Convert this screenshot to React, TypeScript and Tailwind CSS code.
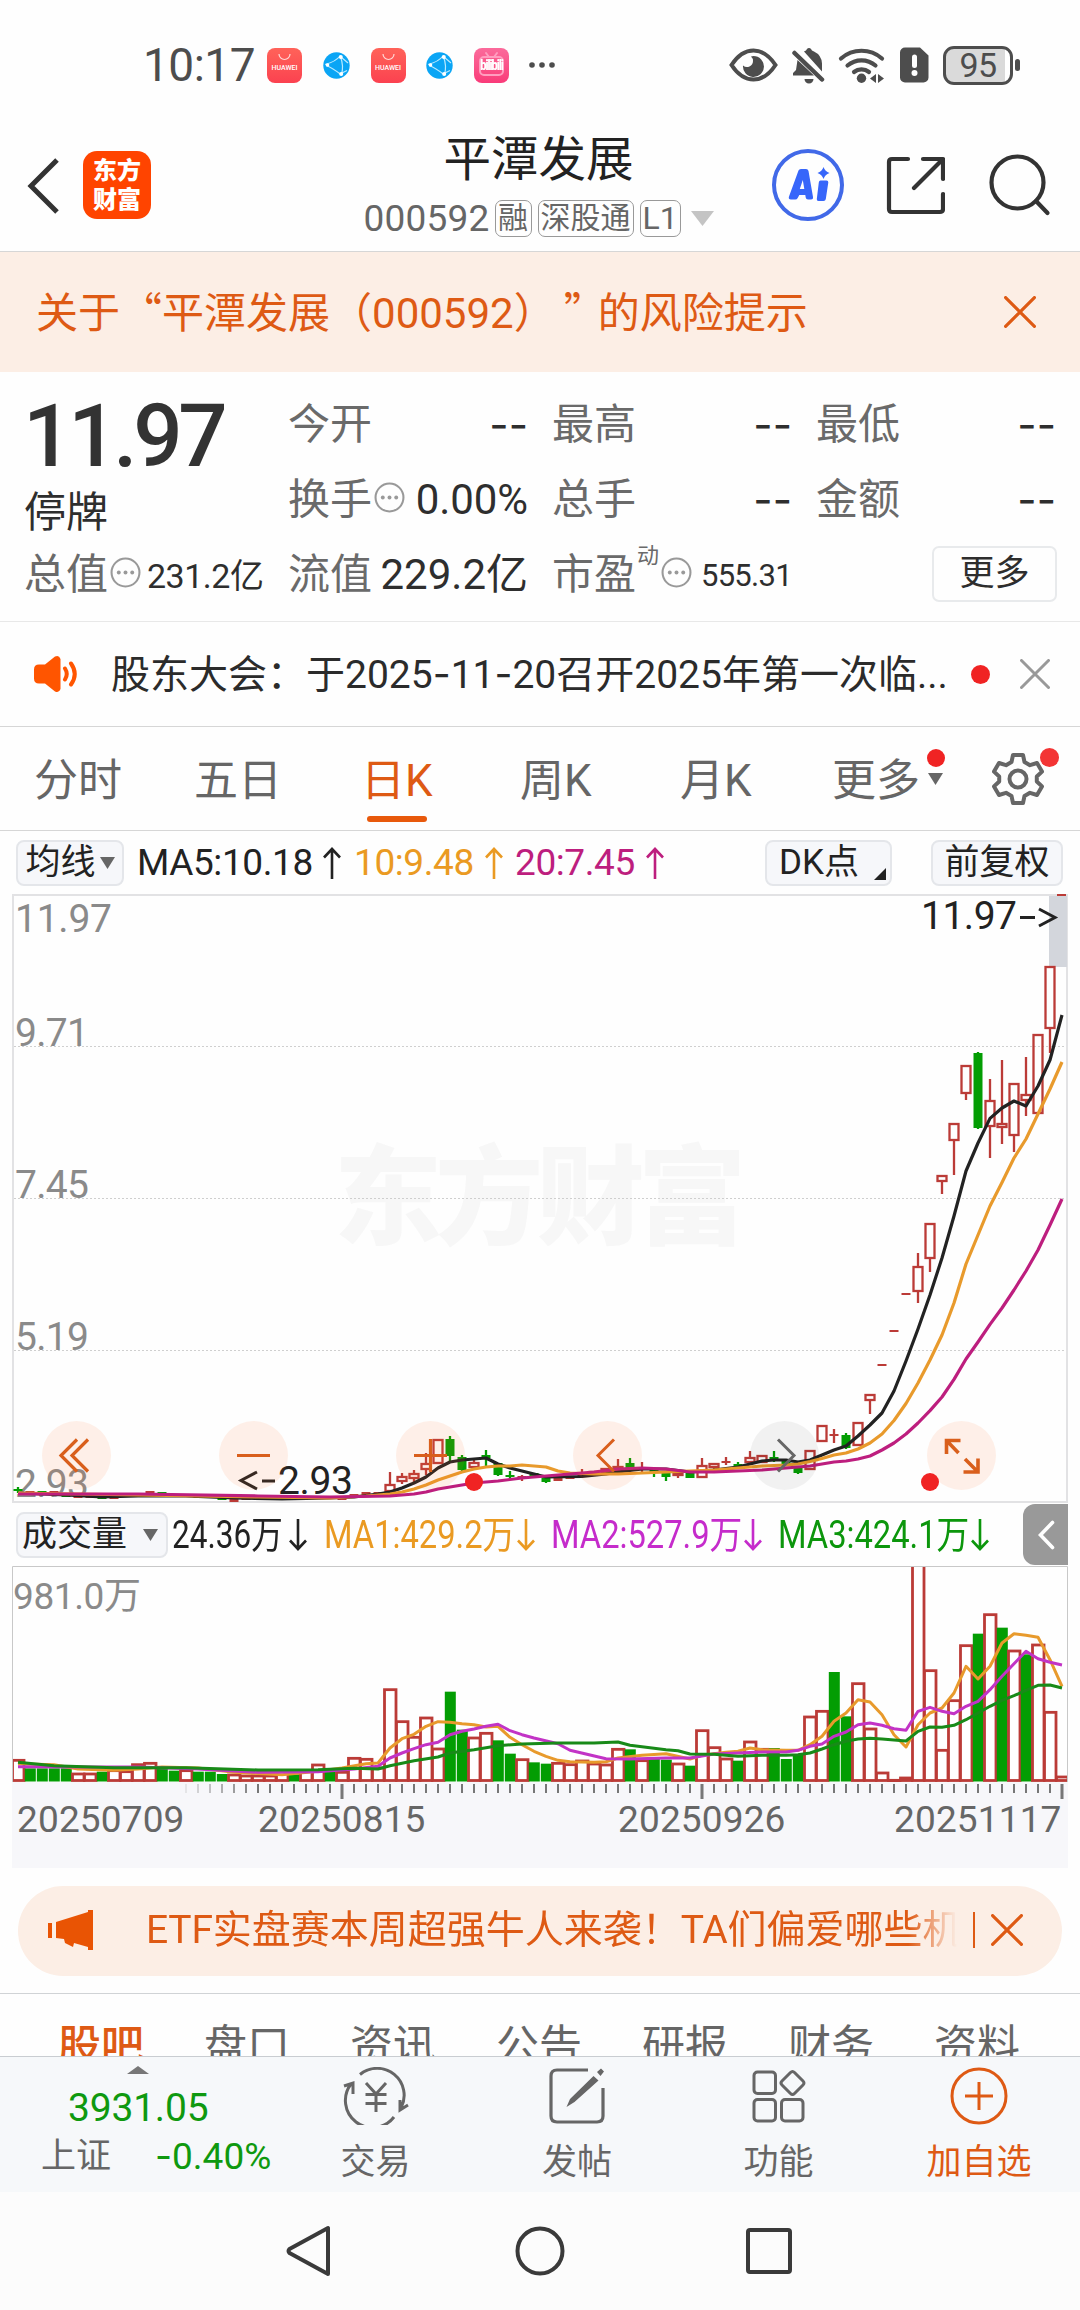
import React from "react";

/* ---------- chart data (vertical values are chart pixels) ---------- */

const CX = (i: number) => 6 + i * 12;

// [index, kind, bodyTop, bodyBottom, wickTop, wickBottom]
type Candle = [number, "r" | "g", number, number, number?, number?];

const candles: Candle[] = [
  [0, "g", 595, 597, 593, 599], [1, "r", 597, 598], [2, "g", 597, 598], [3, "r", 597, 599],
  [4, "g", 600, 603], [5, "r", 601, 604], [6, "r", 601, 604], [7, "g", 603, 605],
  [8, "r", 603, 605], [9, "r", 600, 602], [10, "r", 600, 602], [11, "r", 597, 600],
  [12, "g", 598, 600], [13, "r", 600, 602], [14, "r", 601, 603], [15, "r", 602, 604],
  [16, "g", 602, 604], [17, "g", 603, 606], [18, "r", 605, 608], [19, "r", 604, 606],
  [20, "r", 604, 606], [21, "r", 603, 605], [22, "r", 603, 605], [23, "g", 603, 605],
  [24, "r", 602, 604], [25, "r", 602, 604], [26, "r", 603, 605], [27, "r", 604, 606],
  [28, "r", 600, 602], [29, "r", 598, 601], [30, "r", 598, 600], [31, "r", 590, 598, 578, 598],
  [32, "r", 582, 588, 579, 590], [33, "r", 579, 585, 576, 588], [34, "r", 569, 576, 559, 581],
  [35, "r", 545, 570], [36, "g", 545, 562, 542, 567], [37, "g", 563, 576, 561, 577],
  [38, "r", 568, 574, 566, 576], [39, "g", 561, 564, 556, 572], [40, "g", 569, 581, 569, 582],
  [41, "g", 581, 582, 577, 585], [42, "r", 582, 583, 581, 587], [43, "g", 579, 582],
  [44, "g", 584, 588, 584, 589], [45, "r", 584, 587], [46, "r", 582, 585], [47, "r", 579, 582, 575, 582],
  [48, "r", 577, 581], [49, "r", 574, 579], [50, "r", 572, 577, 565, 577], [51, "g", 569, 574, 564, 576],
  [52, "r", 573, 576, 568, 580], [53, "g", 576, 579, 576, 583], [54, "g", 579, 583, 577, 587],
  [55, "r", 578, 582, 578, 584], [56, "g", 579, 584], [57, "r", 571, 584, 564, 584],
  [58, "r", 569, 574, 569, 575], [59, "r", 567, 569, 563, 571], [60, "g", 570, 572, 568, 573],
  [61, "r", 563, 569, 557, 569], [62, "r", 561, 569], [63, "g", 563, 565, 557, 568],
  [64, "g", 567, 572], [65, "g", 573, 579, 573, 580], [66, "r", 556, 576],
  [67, "r", 531, 548], [68, "r", 540, 542, 535, 549], [69, "g", 541, 554, 539, 555], [70, "r", 528, 552],
  [71, "r", 500, 507, 500, 520], [72, "r", 470, 471], [73, "r", 436, 437], [74, "r", 399, 400],
  [75, "r", 372, 398, 359, 409], [76, "r", 329, 365, 329, 378], [77, "r", 281, 288, 281, 300],
  [78, "r", 229, 247, 229, 281], [79, "r", 171, 200, 171, 206], [80, "g", 159, 234, 158, 235],
  [81, "r", 206, 233, 185, 264], [82, "r", 229, 234, 166, 250], [83, "r", 189, 242, 189, 258],
  [84, "r", 200, 207, 163, 222], [85, "r", 140, 220], [86, "r", 72, 135, 72, 159],
];

type Pts = [number, number][];

const ma5: Pts = [[0, 599], [4, 601], [7, 603], [10, 602], [14, 602], [18, 604], [22, 605], [26, 604], [28, 603], [30, 600], [31, 598], [32, 594], [33, 589], [34, 583], [35, 574], [36, 568], [37, 566], [38, 565], [39, 564], [40, 570], [41, 574], [42, 577], [43, 580], [44, 583], [47, 582.5], [49, 580], [50, 578], [52, 575], [54, 575], [56, 578], [58, 576], [60, 573], [61, 570], [62, 567], [63, 566], [64, 566], [65, 568], [66, 566], [67, 561], [68, 556], [69, 552], [70, 542], [71, 531], [72, 519], [73, 497], [74, 467], [75, 435], [76, 401], [77, 364], [78, 322], [79, 277], [80, 249], [81, 224.4], [82, 214], [83, 207], [84, 212], [85, 192], [86, 166], [87, 121]];
const ma10: Pts = [[0, 599], [10, 601], [20, 603], [26, 604], [29, 602], [31, 600], [32, 598], [33, 595], [34, 591], [35, 586], [36, 582], [37, 578], [38, 575], [39, 573], [40, 572], [41, 572], [42, 571], [43, 572], [44, 573], [45, 577], [46, 579], [48, 580], [50, 580], [52, 579], [54, 578], [56, 577], [58, 576], [60, 574], [62, 572], [64, 571], [65, 570], [66, 567.5], [67, 564.5], [68, 561], [69, 559], [70, 555], [71, 549], [72, 540], [73, 526.5], [74, 509.5], [75, 489], [76, 466], [77, 441], [78, 409], [79, 370], [80, 341], [81, 312], [82, 288.5], [83, 264], [84, 245], [85, 220], [86, 195], [87, 168]];
const ma20: Pts = [[0, 600], [10, 600], [20, 602], [26, 603], [31, 602], [32, 601], [33, 600], [34, 598], [35, 595], [36, 593], [37, 591], [38, 589], [40, 587], [42, 584], [43, 583], [46, 580], [48, 578], [50, 575], [52, 574], [54, 575], [56, 578], [58, 578], [60, 577], [62, 576], [64, 574], [66, 572], [68, 568], [69, 567], [70, 565], [71, 562], [72, 556], [73, 549], [74, 540], [75, 529], [76, 516.6], [77, 503], [78, 485.4], [79, 465], [80, 448], [81, 430.4], [82, 414], [83, 396], [84, 377], [85, 356], [86, 331], [87, 305]];

const red = "#bb3b37";
const green = "#039d03";

const volumes: number[] = [
  1199, -1226, -1226, -1226, -1226, 1240, 1240, -1236, 1230, 1233, 1212, 1208, -1228, -1233, 1230, -1236,
  -1236, -1243, 1243, 1246, 1246, 1246, 1230, -1244, 1230, 1213, -1233, 1235, 1193, 1196, 1222, 987, 1083,
  1130, 1072, 1165, -996, -1110, 1132, 1118, -1142, -1182, 1197, -1208, -1212, 1208, 1212, 1201, 1210, 1213,
  1166, -1169, 1200, -1197, -1200, 1210, -1218, 1110, 1161, 1195, -1203, 1144, 1166, -1165, -1198, -1183,
  1069, 1052, -937, -1070, 969, 1105, 1237, 1259, 1252, 605, 930, 1169, 1020, 855, -822, 762, -804, 871,
  -884, 853, 1055, 1249,
];
const vma1: Pts = [[0, 1212], [3, 1215], [5, 1228], [8, 1232], [10, 1228], [12, 1222], [15, 1225], [18, 1238], [22, 1245], [25, 1235], [27, 1225], [29, 1212], [30, 1210], [31, 1165], [32, 1137], [33, 1124], [34, 1100], [35, 1086], [36, 1088], [37, 1092], [38, 1095], [39, 1102], [40, 1100], [41, 1133], [42, 1155], [43, 1175], [44, 1190], [45, 1202], [46, 1206], [48, 1208], [49, 1206], [50, 1195], [52, 1187], [54, 1182], [56, 1198], [57, 1187], [59, 1178], [60, 1175], [61, 1165], [62, 1170], [64, 1172], [65, 1172], [66, 1155], [67, 1130], [68, 1085], [69, 1060], [70, 1020], [71, 1027], [72, 1065], [73, 1125], [74, 1162], [75, 1095], [76, 1060], [77, 1045], [78, 1000], [79, 920], [80, 958], [81, 920], [82, 850], [83, 822], [84, 827], [85, 833], [86, 900], [87, 980]];
const vma2: Pts = [[0, 1221], [6, 1222], [10, 1222], [15, 1228], [20, 1238], [25, 1236], [28, 1228], [30, 1220], [31, 1195], [32, 1180], [33, 1167], [34, 1155], [35, 1148], [36, 1125], [37, 1115], [38, 1108], [39, 1100], [40, 1094], [41, 1113], [42, 1125], [43, 1135], [45, 1152], [46, 1172], [49, 1197], [51, 1198], [54, 1195], [56, 1195], [58, 1183], [60, 1180], [62, 1177], [64, 1177], [65, 1172], [66, 1160], [67, 1153], [68, 1130], [69, 1117], [70, 1095], [71, 1090], [72, 1097], [73, 1107], [74, 1112], [75, 1055], [76, 1043], [77, 1055], [78, 1062], [79, 1040], [80, 1025], [81, 990], [82, 950], [83, 912], [84, 875], [85, 897], [86, 908], [87, 916]];
const vma3: Pts = [[0, 1208], [3, 1218], [8, 1224], [14, 1224], [20, 1231], [25, 1230], [28, 1226], [30, 1228], [31, 1218], [33, 1203], [35, 1192], [36, 1180], [38, 1170], [40, 1158], [42, 1153], [45, 1150], [48, 1150], [50, 1147], [51, 1157], [54, 1170], [55, 1173], [56, 1183], [58, 1184], [60, 1190], [62, 1187], [64, 1187], [65, 1185], [66, 1180], [67, 1168], [68, 1155], [69, 1145], [70, 1138], [71, 1136], [72, 1138], [74, 1144], [75, 1115], [76, 1102], [77, 1103], [78, 1097], [79, 1080], [80, 1060], [81, 1040], [82, 1022], [83, 1008], [84, 992], [85, 977], [86, 976], [87, 985]];

// Volume readings are stored in thirds of a pixel.
const VY = (v: number) => (v - 619) / 3;

const poly = (pts: Pts, fy: (v: number) => number = (v) => v) =>
  pts.map(([i, v]) => `${CX(i)},${fy(v).toFixed(1)}`).join(" ");

/* ---------- small pieces ---------- */

const Hy = ({ children }: { children: React.ReactNode }) => <span className="font-[Inter]">{children}</span>;

const Arrow = ({ up }: { up?: boolean }) => (
  <svg className="shrink-0" width="20" height="34" viewBox="0 0 20 34" fill="none" stroke="currentColor" strokeWidth="2.6">
    {up ? <path d="M10 33V3M2 11.5L10 3l8 8.5" /> : <path d="M10 1v30M2 22.500L10 31l8-8.500" />}
  </svg>
);

const Cross = ({ size, w = 3 }: { size: number; w?: number }) => (
  <svg width={size} height={size} viewBox="0 0 30 30" fill="none" stroke="currentColor" strokeWidth={w} strokeLinecap="round">
    <path d="M1.500 1.500l27 27M28.500 1.500l-27 27" />
  </svg>
);

const Info = () => (
  <svg className="-mt-[5px] ml-[2px] shrink-0 text-[#999]" width="31" height="31" viewBox="0 0 30 30" fill="none" stroke="currentColor" strokeWidth="2">
    <circle cx="15" cy="15" r="13.500" />
    <g fill="currentColor" stroke="none">
      <circle cx="8.500" cy="15" r="1.900" />
      <circle cx="15" cy="15" r="1.900" />
      <circle cx="21.500" cy="15" r="1.900" />
    </g>
  </svg>
);

const Down = ({ w, h }: { w: number; h: number }) => (
  <svg className="shrink-0" width={w} height={h} viewBox="0 0 10 10" preserveAspectRatio="none" fill="currentColor">
    <path d="M0 0h10L5 10z" />
  </svg>
);

const HuaweiIcon = () => (
  <span className="relative flex h-[35px] w-[35px] shrink-0 items-end justify-center rounded-[8px] bg-gradient-to-b from-[#ff6259] to-[#fb4150] pb-[11px] text-[7px] font-medium leading-none text-white">
    <svg className="absolute left-[11px] top-[5px]" width="13" height="8" viewBox="0 0 13 8" fill="none" stroke="#ffd9d6" strokeWidth="1.200">
      <path d="M1 1a5.500 5.500 0 0 0 11 0" />
    </svg>
    HUAWEI
  </span>
);

const GlobeIcon = () => (
  <svg className="shrink-0" width="27" height="27" viewBox="0 0 27 27">
    <circle cx="13.500" cy="13.500" r="13.200" fill="#0aa5f5" />
    <g fill="none" stroke="#b9eaff" strokeWidth="1.200">
      <path d="M2 12.500C8 11 14 8 17.500 3.500M3 13.500c6 2 11 6 15.500 9.500M17.500 5c2.500 6 2.500 12 1 18M18 5l7 6M18 21.500l6-3" />
    </g>
    <g fill="#fff"><circle cx="17.800" cy="5" r="2" /><circle cx="4.500" cy="13" r="1.800" /><circle cx="18.200" cy="22" r="2" /></g>
  </svg>
);

function StatusBar() {
  return (
    <div className="flex h-[130px] items-center text-[#4d4d4d]">
      <span className="ml-[143px] w-[124px] text-[46px] leading-none tracking-[-0.500px]">10:17</span>
      <div className="flex w-[242px] items-center justify-between">
        <HuaweiIcon />
        <GlobeIcon />
        <HuaweiIcon />
        <GlobeIcon />
        <span className="relative flex h-[35px] w-[35px] items-center justify-center rounded-[8px] bg-gradient-to-b from-[#fb6a9b] to-[#f93a79]">
          <svg className="absolute left-0 top-0" width="35" height="35" viewBox="0 0 35 35" fill="none" stroke="#ff9dbf" strokeWidth="2" strokeLinecap="round">
            <rect x="6" y="9" width="23" height="18" rx="4" />
            <path d="M12 5l3 4M23 5l-3 4" />
          </svg>
          <span className="relative text-[11px] font-black leading-none tracking-[-1px] text-white"><span className="inline-block scale-y-125">bilibili</span></span>
        </span>
      </div>
      <svg className="ml-[20px]" width="26" height="6" viewBox="0 0 26 6" fill="currentColor">
        <circle cx="3" cy="3" r="2.800" /><circle cx="13" cy="3" r="2.800" /><circle cx="23" cy="3" r="2.800" />
      </svg>
      <svg className="ml-[174px]" width="49" height="34" viewBox="0 0 49 34">
        <path d="M2.500 17Q12 2.500 24.500 2.500T46.500 17Q37 31.500 24.500 31.500T2.500 17z" fill="none" stroke="currentColor" strokeWidth="4" />
        <path d="M24.500 8a10.500 10.500 0 1 1-10.500 9.500a6 6 0 0 0 10-4.500a6 6 0 0 0-2-4.500z" fill="currentColor" />
      </svg>
      <svg className="ml-[14px]" width="33" height="37" viewBox="0 0 33 37" fill="currentColor">
        <path d="M12 4.500Q14.500 3.500 15 2a2.500 2.500 0 0 1 4 0q.5 1.500 3 2.500q7.500 3.500 8 12v8zM5.500 13L22 28.500H1v-2.500l3-3z" />
        <path d="M12.500 32h9a4.500 4.500 0 0 1-9 0z" />
        <path d="M2.500 6L30 32.500" stroke="currentColor" strokeWidth="4.500" strokeLinecap="round" />
      </svg>
      <svg className="ml-[13px]" width="48" height="38" viewBox="0 0 48 38" fill="none" stroke="currentColor" strokeWidth="4.200" strokeLinecap="round">
        <path d="M3 12.500a31 31 0 0 1 41 0M9.500 19.500a21.500 21.500 0 0 1 28 0M16 26a12 12 0 0 1 15 0" />
        <circle cx="23.500" cy="32.300" r="4.700" fill="currentColor" stroke="none" />
        <path d="M38 28v9l-6-4.500zM40 28v9l6-4.500z" fill="currentColor" stroke="none" />
      </svg>
      <svg className="ml-[14px]" width="29" height="36" viewBox="0 0 29 36">
        <path d="M5 0.500h15l8.500 8v22a5 5 0 0 1-5 5H5a5 5 0 0 1-5-5v-25a5 5 0 0 1 5-5z" fill="currentColor" />
        <path d="M14.500 10v8.500" stroke="#fff" strokeWidth="5" strokeLinecap="round" />
        <circle cx="14.500" cy="26" r="3" fill="#fff" />
      </svg>
      <span className="ml-[14px] flex h-[39px] w-[70px] items-center justify-center rounded-[11px] border-[3px] border-[#4d4d4d] bg-[linear-gradient(to_right,#dadada_92%,#ffffff_92%)] text-[34px] leading-none tracking-[-0.500px]">
        95
      </span>
      <span className="ml-[2px] h-[12px] w-[5px] rounded-full bg-[#4d4d4d]" />
    </div>
  );
}

function Header() {
  return (
    <div className="flex h-[122px] items-center border-b border-[#d6d6d6] pb-[13px] text-[#2b2b2b]">
      <svg className="ml-[26px] mt-[3px]" width="34" height="56" viewBox="0 0 34 56" fill="none" stroke="#333" strokeWidth="5">
        <path d="M31 2L5 28l26 26" />
      </svg>
      <div className="ml-[23px] mt-[2px] flex h-[68px] w-[68px] flex-col items-center justify-center gap-[3px] rounded-[14px] bg-[#ff4400] text-[24px] font-black leading-[26px] text-white">
        <span>东方</span>
        <span>财富</span>
      </div>
      <div className="ml-[210px] flex w-[355px] flex-col items-center">
        <div className="mt-[3px] text-[47.500px] leading-[52px] text-[#222]">平潭发展</div>
        <div className="mt-[13px] flex h-[38px] items-center text-[37px] leading-none text-[#666]">
          <span className="w-[131px] tracking-[0.200px]">000592</span>
          <span className="flex h-[37px] w-[37px] items-center justify-center rounded-[7px] border-[1.500px] border-[#999] text-[30px]">融</span>
          <span className="ml-[6px] flex h-[37px] w-[96px] items-center justify-center rounded-[7px] border-[1.500px] border-[#999] text-[30px]">深股通</span>
          <span className="ml-[6px] flex h-[37px] w-[41px] items-center justify-center rounded-[7px] border-[1.500px] border-[#999] text-[32px]">L1</span>
          <span className="ml-[10px] text-[#c4c4c4]"><Down w={23} h={15} /></span>
        </div>
      </div>
      <div className="ml-[56px] mt-[2px] flex h-[72px] w-[72px] items-center justify-center rounded-full border-4 border-[#4169e8] text-[#3766fa]">
        <svg width="44" height="36" viewBox="0 0 44 36" fill="currentColor">
          <path fillRule="evenodd" d="M12.500 3.500Q13 2 15 2h5q2 0 2.500 2l4.500 26q.3 2.500-2 2.500h-3q-2 0-2.300-2l-.4-2.500h-6l-1.600 3q-.8 1.500-2.500 1.500H5q-3 0-2-3zM13.800 22h4.500l-1.500-9z" />
          <path d="M34.500 13.500h6q2 0 1.800 2l-2.500 16.500q-.3 2-2.300 2h-5q-2 0-1.700-2l2-16.500q.2-2 1.700-2z" />
          <path d="M37.500 0q1.500 4.500 6 6q-4.500 1.500-6 6q-1.500-4.500-6-6q4.500-1.500 6-6z" />
        </svg>
      </div>
      <svg className="ml-[42px] mt-[2px]" width="59" height="59" viewBox="0 0 59 59" fill="none" stroke="#333" strokeWidth="4.200" strokeLinecap="round" strokeLinejoin="round">
        <path d="M22 3H6q-3 0-3 3v47q0 3 3 3h48q3 0 3-3V38M37 3h20v20M56 4L28 32" />
      </svg>
      <svg className="ml-[44px] mt-[2px]" width="62" height="62" viewBox="0 0 62 62" fill="none" stroke="#333" strokeWidth="4.200" strokeLinecap="round">
        <circle cx="28.500" cy="28.500" r="26" />
        <path d="M47 47l11.500 12" />
      </svg>
    </div>
  );
}

const Label = ({ children }: { children: React.ReactNode }) => <span className="text-[#6a6a6a]">{children}</span>;
const Dashes = () => <span className="text-[42px]"><Hy>--</Hy></span>;

function Quote() {
  return (
    <div className="flex h-[250px] border-b border-[#e8e8e8] px-[24px] text-[42px] leading-none text-[#2e2e2e]">
      <div className="w-[264px]">
        <div className="-ml-[1px] mt-[21px] h-[86px] text-[87px] font-medium leading-[86px] tracking-[-4.300px] text-[#333]">11.97</div>
        <div className="mt-[13px] leading-[42px]">停牌</div>
        <div className="mt-[20px] flex h-[42px] items-center">
          <Label>总值</Label>
          <Info />
          <span className="ml-[6px] mt-[2px] text-[34px] tracking-[-0.500px]">231.2亿</span>
        </div>
      </div>
      <div className="grid w-[240px] grid-rows-[42px_42px_42px] content-start gap-y-[33px] pt-[32px]">
        <div className="flex items-center justify-between"><Label>今开</Label><Dashes /></div>
        <div className="flex items-center">
          <Label>换手</Label><Info /><span className="ml-auto tracking-[-0.100px]">0.00%</span>
        </div>
        <div className="flex items-center justify-between"><Label>流值</Label><span>229.2亿</span></div>
      </div>
      <div className="ml-[24px] grid w-[240px] grid-rows-[42px_42px_42px] content-start gap-y-[33px] pt-[32px]">
        <div className="flex items-center justify-between"><Label>最高</Label><Dashes /></div>
        <div className="flex items-center justify-between"><Label>总手</Label><Dashes /></div>
        <div className="flex items-center">
          <Label>市盈</Label>
          <span className="-mt-[38px] ml-[1px] text-[22px] text-[#6a6a6a]">动</span>
          <Info />
          <span className="ml-auto text-[31px] tracking-[-0.700px]">555.31</span>
        </div>
      </div>
      <div className="ml-[24px] grid w-[240px] grid-rows-[42px_42px_42px] content-start gap-y-[33px] pt-[32px]">
        <div className="flex items-center justify-between"><Label>最低</Label><Dashes /></div>
        <div className="flex items-center justify-between"><Label>金额</Label><Dashes /></div>
        <div className="flex items-center justify-end">
          <span className="-mr-[1px] -mt-[3px] flex h-[56px] w-[125px] shrink-0 items-center justify-center rounded-[7px] border-2 border-[#e8eaec] text-[35px]">更多</span>
        </div>
      </div>
    </div>
  );
}

function News() {
  return (
    <div className="flex h-[105px] items-center border-b border-[#d6d6d6] text-[39px] leading-none text-[#2b2b2b]">
      <svg className="ml-[33px]" width="46" height="38" viewBox="0 0 46 38" fill="#ff5500">
        <path d="M1 14.500q0-5 5-5h6L22 1.500Q26-.5 27.500 4v30q-1.500 4.500-5.500 2.500L12 28.500H6q-5 0-5-5z" />
        <path d="M32 13.500q3.500 5.500 0 11M38 8.500q7.500 10.500 0 21" fill="none" stroke="#ff5500" strokeWidth="4" strokeLinecap="round" />
      </svg>
      <span className="ml-[32px] w-[850px] whitespace-nowrap">
        股东大会：于2025<Hy>-</Hy>11<Hy>-</Hy>20召开2025年第一次临...
      </span>
      <span className="ml-[10px] h-[19px] w-[19px] rounded-full bg-[#f02323]" />
      <span className="ml-[30px] text-[#999]"><Cross size={30} /></span>
    </div>
  );
}

function PeriodTabs() {
  return (
    <div className="flex h-[104px] items-center border-b border-[#d6d6d6] text-[44px] leading-none text-[#666]">
      <span className="ml-[34px] mt-[5px] w-[160px]">分时</span>
      <span className="mt-[5px] w-[167px]">五日</span>
      <span className="relative mt-[5px] w-[159px] text-[#de5a14]">
        日K
        <span className="absolute left-[6px] top-[57px] h-[6px] w-[60px] rounded-full bg-[#e8590c]" />
      </span>
      <span className="mt-[5px] w-[160px]">周K</span>
      <span className="mt-[5px] w-[152px]">月K</span>
      <span className="relative mt-[5px] flex w-[159px] items-center">
        更多
        <span className="-mt-[4px] ml-[8px]"><Down w={15} h={12} /></span>
        <span className="absolute left-[95px] top-[-10px] h-[18px] w-[18px] rounded-full bg-[#f02323]" />
      </span>
      <span className="relative">
        <svg width="54" height="54" viewBox="0 0 54 54" fill="none" stroke="#666" strokeWidth="4" strokeLinejoin="round">
          <path d="M22 3h10l1.500 7l5.500 3.200l7-2.200l5 8.600l-5.200 4.900v5l5.200 4.900l-5 8.600l-7-2.200l-5.500 3.200L32 51H22l-1.500-7l-5.500-3.200l-7 2.200l-5-8.600l5.200-4.900v-5L3 19.600L8 11l7 2.200l5.500-3.200z" />
          <circle cx="27" cy="27" r="8.500" />
        </svg>
        <span className="absolute right-[-14px] top-[-4px] h-[19px] w-[19px] rounded-full bg-[#f33434]" />
      </span>
    </div>
  );
}

const chip = "flex items-center rounded-[8px] border-2 border-[#e4e6ea] bg-[#f6f7fa] text-[35px]";

function MaBar() {
  return (
    <div className="flex h-[63px] items-center text-[37px] leading-none text-[#222]">
      <span className={`${chip} ml-[16px] h-[46px] w-[108px] justify-center gap-[4px]`}>
        均线<span className="text-[#666]"><Down w={15} h={12} /></span>
      </span>
      <span className="ml-[13px] flex w-[217px] items-center justify-between pr-[12px] tracking-[-0.400px]">MA5:10.18<Arrow up /></span>
      <span className="flex w-[161px] items-center justify-between pr-[11px] tracking-[-0.400px] text-[#ea9a22]">10:9.48<Arrow up /></span>
      <span className="flex w-[150px] items-center justify-between tracking-[-0.400px] text-[#bd1e7e]">20:7.45<Arrow up /></span>
      <span className={`${chip} relative ml-[100px] h-[46px] w-[127px] pl-[12px]`}>
        DK点
        <svg className="absolute bottom-[4px] right-[4px]" width="12" height="12" viewBox="0 0 12 12"><path d="M12 0v12H0z" fill="#222" /></svg>
      </span>
      <span className={`${chip} ml-[39px] h-[46px] w-[132px] justify-center`}>前复权</span>
    </div>
  );
}

const controls = [
  { left: "left-[28px]", tone: "bg-[#ff6a20]/10", d: "M35 18.500L19 34.500l16 16M46 18.500L30 34.500l16 16", c: "#d95f1c", w: 3.2 },
  { left: "left-[205px]", tone: "bg-[#ff6a20]/10", d: "M18 34.500h33", c: "#d95f1c", w: 3.2 },
  { left: "left-[382px]", tone: "bg-[#ff6a20]/10", d: "M18 34.500h33M34.500 18v33", c: "#d95f1c", w: 3.2 },
  { left: "left-[559px]", tone: "bg-[#ff6a20]/10", d: "M41 18.500L25 34.500l16 16", c: "#d95f1c", w: 3 },
  { left: "left-[736px]", tone: "bg-black/5", d: "M28 18.500L44 34.500l-16 16", c: "#666", w: 3 },
  { left: "left-[913px]", tone: "bg-[#ff6a20]/10", d: "M19.500 33V19.500h14M20 20l11.500 12M51 37.500V51H36.500M50.500 50.500L38 38", c: "#d95f1c", w: 3.6 },
];

function PriceChart() {
  return (
    <div className="relative ml-[12px] h-[609px] w-[1056px] border-2 border-[#e2e2e4]">
      <svg className="absolute -left-[2px] -top-[2px]" width="1056" height="609" viewBox="0 0 1056 609" fontFamily="Roboto, 'Noto Sans CJK SC', sans-serif">
        <text x="322" y="342" fontSize="108" fontWeight="900" fill="#f7f7f7" textLength="412" fontFamily="'Noto Sans CJK SC', sans-serif">东方财富</text>
        {[152.5, 304.5, 456.5].map((y) => (
          <line key={y} x1="2" x2="1054" y1={y} y2={y} stroke="#cfcfcf" strokeWidth="1" strokeDasharray="2 2" />
        ))}
        <rect x="1037" y="2" width="18" height="71" fill="#d3d6dc" />
        <rect x="1045" y="0" width="9" height="2" fill={red} />
        <g fontSize="39" fill="#8a8a8a">
          <text x="3" y="38" textLength="97">11.97</text>
          <text x="3" y="152" textLength="74">9.71</text>
          <text x="3" y="304" textLength="74">7.45</text>
          <text x="3" y="456" textLength="74">5.19</text>
          <text x="3" y="603" textLength="74">2.93</text>
        </g>
        <g strokeWidth="2.300">
          {candles.map(([i, k, t, b, wt, wb]) => {
            const c = k === "r" ? red : green;
            const hollow = k === "r" && b - t >= 4;
            return (
              <g key={i} stroke={c} fill={c}>
                {wt !== undefined && wt < t && <line x1={CX(i)} x2={CX(i)} y1={wt} y2={t} />}
                {wb !== undefined && wb > b && <line x1={CX(i)} x2={CX(i)} y1={b} y2={wb} />}
                {hollow ? (
                  <rect x={CX(i) - 4.500} y={t + 1} width="9" height={b - t - 2} fill="none" />
                ) : (
                  <rect x={CX(i) - 4.500} y={t} width="9" height={Math.max(b - t, 2)} stroke="none" />
                )}
              </g>
            );
          })}
        </g>
        <g fill="none" strokeWidth="3.200" strokeLinejoin="round">
          <polyline points={poly(ma5)} stroke="#222" />
          <polyline points={poly(ma10)} stroke="#e89a2c" />
          <polyline points={poly(ma20)} stroke="#bd1e7e" />
        </g>
        <g fontSize="39" fill="#222">
          <text x="909" y="35" textLength="96">11.97</text>
          <path d="M1008 23.500h15M1027 15l16 8.500l-16 8.500" fill="none" stroke="#222" strokeWidth="3" />
          <path d="M245 578l-16 8.500l16 8.500M250 587h13" fill="none" stroke="#222" strokeWidth="3" />
          <text x="266" y="600" textLength="75">2.93</text>
        </g>
      </svg>
      {controls.map((b) => (
        <span key={b.left} className={`absolute top-[525px] h-[69px] w-[69px] rounded-full ${b.left} ${b.tone}`}>
          <svg width="69" height="69" viewBox="0 0 69 69" fill="none" stroke={b.c} strokeWidth={b.w}><path d={b.d} /></svg>
        </span>
      ))}
      <span className="absolute left-[451px] top-[577px] h-[18px] w-[18px] rounded-full bg-[#f02323]" />
      <span className="absolute left-[907px] top-[577px] h-[18px] w-[18px] rounded-full bg-[#f02323]" />
    </div>
  );
}

function VolumeBar() {
  return (
    <div className="flex h-[63px] items-center text-[38px] leading-none text-[#222]">
      <span className={`${chip} ml-[16px] h-[46px] w-[152px] pl-[4px]`}>
        成交量<span className="ml-[16px] text-[#666]"><Down w={15} h={12} /></span>
      </span>
      <span className="ml-[4px] flex w-[152px] items-center">
        <span className="w-[116px]"><span className="inline-block origin-left scale-x-[0.830] whitespace-nowrap">24.36万</span></span><Arrow />
      </span>
      <span className="flex w-[227px] items-center text-[#ea9a22]">
        <span className="w-[192px]"><span className="inline-block origin-left scale-x-[0.860] whitespace-nowrap">MA1:429.2万</span></span><Arrow />
      </span>
      <span className="flex w-[227px] items-center text-[#c52bcb]">
        <span className="w-[192px]"><span className="inline-block origin-left scale-x-[0.860] whitespace-nowrap">MA2:527.9万</span></span><Arrow />
      </span>
      <span className="flex w-[245px] items-center text-[#0c960c]">
        <span className="w-[192px]"><span className="inline-block origin-left scale-x-[0.860] whitespace-nowrap">MA3:424.1万</span></span><Arrow />
      </span>
      <span className="flex h-[61px] w-[45px] items-center justify-center rounded-l-[12px] bg-[#999]">
        <svg width="18" height="30" viewBox="0 0 18 30" fill="none" stroke="#fff" strokeWidth="3.600" strokeLinecap="round"><path d="M15.500 2.500L3.500 15l12 12.500" /></svg>
      </span>
    </div>
  );
}

function VolumeChart() {
  return (
    <div className="ml-[12px] w-[1056px]">
      <svg className="block" width="1056" height="216" viewBox="0 0 1056 216" fontFamily="Roboto, 'Noto Sans CJK SC', sans-serif">
        <text x="1" y="43" fontSize="37" fill="#8a8a8a" textLength="128">981.0万</text>
        {volumes.map((v, i) => {
          const t = VY(Math.abs(v));
          return v > 0 ? (
            <rect key={i} x={CX(i) - 5.500} y={t + 1} width="11.500" height={Math.max(213.500 - t, 1)} fill="#fff" stroke={red} strokeWidth="2.800" />
          ) : (
            <rect key={i} x={CX(i) - 5.200} y={t} width="11" height={215.500 - t} fill={green} />
          );
        })}
        <g fill="none" strokeWidth="3" strokeLinejoin="round">
          <polyline points={poly(vma1, VY)} stroke="#e89a2c" />
          <polyline points={poly(vma2, VY)} stroke="#c233c6" />
          <polyline points={poly(vma3, VY)} stroke="#188a18" />
        </g>
        <path d="M0.500 216V0.500h1055V216" fill="none" stroke="#c8c8c8" strokeWidth="1" />
      </svg>
      <div className="bg-[#f7f7fa]">
        <svg className="block" width="1056" height="20" viewBox="0 0 1056 20">
          {Array.from({ length: 88 }, (_, i) => i).filter((i) => i >= 14).map((i) => {
            const major = i === 27 || i === 57 || i === 87;
            return <rect key={i} x={CX(i) - (major ? 1.5 : 1)} y="2" width={major ? 3 : 2} height={major ? 15 : 9} fill="#777" opacity={Math.min(1, (i - 13) / 7)} />;
          })}
        </svg>
        <div className="flex h-[66px] text-[37px] leading-[35px] tracking-[0.150px] text-[#666]">
          <span className="ml-[5px] w-[241px]">20250709</span>
          <span className="w-[360px]">20250815</span>
          <span className="w-[276px]">20250926</span>
          <span>20251117</span>
        </div>
      </div>
    </div>
  );
}

function Promo() {
  return (
    <div className="h-[126px] border-b border-[#d0d3d6] px-[18px] pt-[18px]">
      <div className="flex h-[90px] items-center rounded-full bg-[#fceee5] pb-[2px] text-[39px] leading-none text-[#de5a14]">
        <svg className="ml-[30px]" width="46" height="40" viewBox="0 0 46 40" fill="#e95404">
          <path d="M0 13h4v15H0zM8 12L40 2V0h5v40h-5v-3L26 33l-1 4l-8-4l-1-4l-8-1z" />
        </svg>
        <span className="ml-[52px] w-[811px] overflow-hidden whitespace-nowrap leading-[48px] [mask-image:linear-gradient(to_right,#000_94%,transparent)]">
          <span className="tracking-[-0.200px]">ETF</span>实盘赛本周超强牛人来袭！<span className="tracking-[-0.200px]">TA</span>们偏爱哪些机构
        </span>
        <span className="ml-[16px] h-[36px] w-[2px] bg-[#de5a14]" />
        <span className="ml-[16px]"><Cross size={32} /></span>
      </div>
    </div>
  );
}

function SectionTabs() {
  const items = ["盘口", "资讯", "公告", "研报", "财务", "资料"];
  return (
    <div className="flex h-[62px] overflow-hidden pl-[58px] pt-[31px] text-[43px] leading-[43px] text-[#666]">
      <span className="w-[146px] shrink-0 font-medium text-[#de5a14]">股吧</span>
      {items.map((t) => <span key={t} className="w-[146px] shrink-0">{t}</span>)}
    </div>
  );
}

function BottomBar() {
  return (
    <div className="flex h-[136px] border-t border-[#c9cdd1] bg-[#f6f8fa] text-[35px] leading-none text-[#666]">
      <div className="relative w-[274px] text-[#0f990f]">
        <svg className="absolute left-[127px] top-[9px]" width="22" height="8" viewBox="0 0 22 8"><path d="M11 0l11 8H0z" fill="#777" /></svg>
        <div className="ml-[68px] mt-[31px] text-[39px] leading-[40px] tracking-[-0.200px]">3931.05</div>
        <div className="ml-[41px] mt-[8px] flex h-[40px] items-center">
          <span className="w-[114px] text-[#666]">上证</span>
          <span className="whitespace-nowrap text-[37px]"><Hy>-</Hy>0.40%</span>
        </div>
      </div>
      <div className="flex w-[203px] flex-col items-center pt-[10px]">
        <svg width="66" height="58" viewBox="0 0 66 58" fill="none" stroke="#666" strokeWidth="3">
          <path d="M17 7.500A27 27 0 0 1 58 41M51 50A27 27 0 0 1 8 17M1 19l9-3v11M57 33v10l8-5" />
          <path d="M23 16l10 11l10-11M33 27v18M22.500 27.500h21M22.500 36.500h21" />
        </svg>
        <span className="mt-[20px]">交易</span>
      </div>
      <div className="flex w-[200px] flex-col items-center pt-[11px]">
        <svg width="56" height="56" viewBox="0 0 56 56" fill="none" stroke="#666" strokeWidth="3.200">
          <path d="M39 2H8Q2 2 2 8v40q0 6 6 6h40q6 0 6-6V20" />
          <path d="M44.500 8l5 4.500L25.500 34l-8 5l3.500-8zM48 4l4-3.500l3 3L51.500 8z" fill="#666" stroke="none" />
        </svg>
        <span className="mt-[21px]">发帖</span>
      </div>
      <div className="flex w-[203px] flex-col items-center pt-[12px]">
        <svg width="54" height="54" viewBox="0 0 54 54" fill="none" stroke="#666" strokeWidth="3">
          <rect x="2" y="3" width="21.500" height="21.500" rx="3.500" />
          <rect x="2" y="30.500" width="21.500" height="21.500" rx="3.500" />
          <rect x="29.500" y="30.500" width="21.500" height="21.500" rx="3.500" />
          <path d="M38.500 3.500q2-2 4 0l8.500 8.500q2 2 0 4l-8.500 8.500q-2 2-4 0L30 16q-2-2 0-4z" />
        </svg>
        <span className="mt-[22px]">功能</span>
      </div>
      <div className="flex w-[198px] flex-col items-center pt-[10px] text-[#de5a14]">
        <svg width="58" height="58" viewBox="0 0 58 58" fill="none" stroke="currentColor" strokeWidth="3">
          <circle cx="29" cy="29" r="27" />
          <path d="M15 29h28M29 15v28" />
        </svg>
        <span className="mt-[20px]">加自选</span>
      </div>
    </div>
  );
}

function NavBar() {
  return (
    <div className="flex h-[118px] items-center bg-[#fcfcfc] pb-[1px]">
      <svg className="ml-[286px]" width="46" height="52" viewBox="0 0 46 52" fill="none" stroke="#3a3a3a" strokeWidth="4" strokeLinejoin="round">
        <path d="M42 3v46L3.500 28q-2-2 0-4z" />
      </svg>
      <svg className="ml-[183px]" width="50" height="50" viewBox="0 0 50 50" fill="none" stroke="#3a3a3a" strokeWidth="4"><circle cx="25" cy="25" r="22.500" /></svg>
      <span className="ml-[181px] h-[46px] w-[46px] rounded-[4px] border-4 border-[#3a3a3a]" />
    </div>
  );
}

export default function App() {
  return (
    <div className="h-[2310px] w-[1080px] overflow-hidden bg-[#fefefe] font-[Roboto,'Noto_Sans_CJK_SC',sans-serif]" lang="zh-CN">
      <StatusBar />
      <Header />
      <div className="flex h-[120px] items-center justify-between bg-[#fceee5] pl-[36px] pr-[44px] text-[42px] leading-none text-[#de5a14]">
        <span className="[text-spacing-trim:space-all]">
          关于<span className="font-['Noto_Sans_CJK_SC']">“</span>平潭发展（000592）<span className="ml-[8px] mr-[-8px] font-['Noto_Sans_CJK_SC']">”</span>的风险提示
        </span>
        <Cross size={32} />
      </div>
      <Quote />
      <News />
      <PeriodTabs />
      <MaBar />
      <PriceChart />
      <VolumeBar />
      <VolumeChart />
      <Promo />
      <SectionTabs />
      <BottomBar />
      <NavBar />
    </div>
  );
}
